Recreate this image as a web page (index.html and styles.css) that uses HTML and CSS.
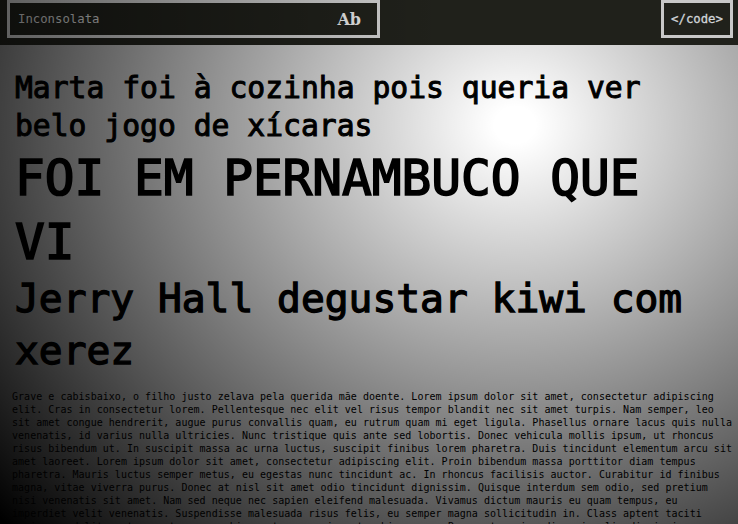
FILE: index.html
```html
<!DOCTYPE html>
<html lang="pt">
<head>
<meta charset="utf-8">
<title>Inconsolata</title>
<link rel="stylesheet" href="styles.css">
</head>
<body>
<header class="topbar">
  <div class="picker">
    <span class="picker-name">Inconsolata</span>
    <span class="picker-ab">Ab</span>
  </div>
  <button class="code-btn">&lt;/code&gt;</button>
</header>
<main class="specimen">
  <p class="line line-m">Marta foi à cozinha pois queria ver belo jogo de xícaras</p>
  <p class="line line-l">FOI EM PERNAMBUCO QUE VI</p>
  <p class="line line-n">Jerry Hall degustar kiwi com xerez</p>
  <p class="para">Grave e cabisbaixo, o filho justo zelava pela querida mãe doente. Lorem ipsum dolor sit amet, consectetur adipiscing elit. Cras in consectetur lorem. Pellentesque nec elit vel risus tempor blandit nec sit amet turpis. Nam semper, leo sit amet congue hendrerit, augue purus convallis quam, eu rutrum quam mi eget ligula. Phasellus ornare lacus quis nulla venenatis, id varius nulla ultricies. Nunc tristique quis ante sed lobortis. Donec vehicula mollis ipsum, ut rhoncus risus bibendum ut. In suscipit massa ac urna luctus, suscipit finibus lorem pharetra. Duis tincidunt elementum arcu sit amet laoreet. Lorem ipsum dolor sit amet, consectetur adipiscing elit. Proin bibendum massa porttitor diam tempus pharetra. Mauris luctus semper metus, eu egestas nunc tincidunt ac. In rhoncus facilisis auctor. Curabitur id finibus magna, vitae viverra purus. Donec at nisl sit amet odio tincidunt dignissim. Quisque interdum sem odio, sed pretium nisi venenatis sit amet. Nam sed neque nec sapien eleifend malesuada. Vivamus dictum mauris eu quam tempus, eu imperdiet velit venenatis. Suspendisse malesuada risus felis, eu semper magna sollicitudin in. Class aptent taciti sociosqu ad litora torquent per conubia nostra, per inceptos himenaeos. Praesent sapien diam, iaculis dignissim.</p>
</main>
<div class="vignette"></div>
</body>
</html>
```
FILE: styles.css
```css
* { box-sizing: border-box; }
html, body { height: 100%; }
body {
  margin: 0;
  background: #fff;
  color: #000;
  overflow: hidden;
  font-family: "DejaVu Sans Mono", monospace;
}
.topbar {
  position: relative;
  z-index: 1;
  height: 45px;
  background: #20211b;
  display: flex;
  justify-content: space-between;
  align-items: flex-start;
  padding: 0 5px 0 7px;
}
.topbar::after {
  content: "";
  position: absolute;
  inset: 0;
  pointer-events: none;
  background: linear-gradient(to right, rgba(0,0,0,.55), rgba(0,0,0,0) 60%);
}
.picker {
  width: 373px;
  height: 38px;
  border: 3px solid #d0d0d0;
  display: flex;
  align-items: center;
  justify-content: space-between;
  padding: 0 16px 0 8px;
}
.picker-name {
  font-size: 12.3px;
  color: #d8d8d8;
}
.picker-ab {
  font-family: "DejaVu Serif", serif;
  font-weight: 700;
  font-size: 16px;
  color: #e8e8e8;
}
.code-btn {
  width: 72px;
  height: 38px;
  border: 3px solid #c8c8c8;
  background: transparent;
  color: #d0d4d8;
  font-family: "DejaVu Sans Mono", monospace;
  font-size: 12.3px;
  -webkit-text-stroke: 0.3px currentColor;
  padding: 0;
}
.specimen { padding: 0 4px 0 12px; }
.line {
  margin: 0 0 0 3px;
  max-width: 700px;
  -webkit-text-stroke: 1px currentColor;
}
.line-m { font-size: 29.7px; line-height: 38px; margin-top: 24px; }
.line-l { font-size: 49.4px; line-height: 64px; margin-top: 1px; -webkit-text-stroke-width: 1.7px; }
.line-n { font-size: 39.6px; line-height: 52px; margin-top: -2px; -webkit-text-stroke-width: 1.3px; }
.para { margin: 14px 0 0; font-size: 10px; line-height: 13px; letter-spacing: 0.03px; }
.vignette {
  position: absolute;
  inset: 0;
  pointer-events: none;
  background: radial-gradient(ellipse 680px 600px at 515px 125px, rgba(0,0,0,0) 3%, rgba(0,0,0,1) 100%);
}
```
